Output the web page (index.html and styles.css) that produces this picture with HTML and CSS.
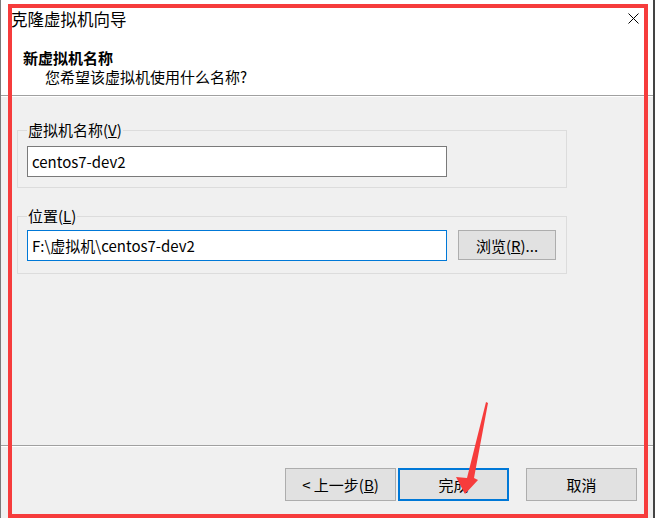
FILE: index.html
```html
<!DOCTYPE html>
<html lang="zh-CN">
<head>
    <meta charset="UTF-8">
    <title>克隆虚拟机向导</title>
    <link rel="stylesheet" href="styles.css">
</head>
<body>
    <div class="window">
        <div class="titlebar">
            <span class="title">克隆虚拟机向导</span>
            <svg class="close" width="11" height="11" viewBox="0 0 11 11">
                <path d="M0.5 0.5 L10.5 10.5 M10.5 0.5 L0.5 10.5" stroke="#000" stroke-width="1" fill="none"/>
            </svg>
        </div>
        <div class="header">
            <div class="header-title">新虚拟机名称</div>
            <div class="header-sub">您希望该虚拟机使用什么名称?</div>
        </div>
        <div class="content">
            <fieldset class="group">
                <legend>虚拟机名称(<u>V</u>)</legend>
                <input class="field" type="text" value="centos7-dev2" readonly>
            </fieldset>
            <fieldset class="group group-location">
                <legend>位置(<u>L</u>)</legend>
                <div class="row">
                    <input class="field field-focus" type="text" value="F:\虚拟机\centos7-dev2" readonly>
                    <button class="btn btn-browse">浏览(<u>R</u>)...</button>
                </div>
            </fieldset>
        </div>
        <div class="footer">
            <button class="btn">&lt; 上一步(<u>B</u>)</button>
            <button class="btn btn-default">完成</button>
            <button class="btn btn-cancel">取消</button>
        </div>

        <!-- annotation overlay -->
        <div class="annot-box"></div>
        <svg class="annot-arrow" width="45" height="100" viewBox="0 0 45 100">
            <polygon points="36,4 38,5 24,80 28,82 15,96 6,79 17,80" fill="#f63c3c"/>
        </svg>
    </div>
</body>
</html>
```

FILE: styles.css
```css
* {
    box-sizing: border-box;
}

body {
    margin: 0;
    background: #f0f0f0;
    font-family: "Noto Sans CJK SC", "Noto Sans", sans-serif;
    color: #000;
}

.window {
    position: relative;
    width: 655px;
    height: 518px;
    border-left: 1px solid #7a7a7a;
    border-right: 2px solid #444;
    background: #f0f0f0;
    display: flex;
    flex-direction: column;
    overflow: hidden;
}

.titlebar {
    height: 38px;
    background: #fff;
    display: flex;
    align-items: center;
    justify-content: space-between;
    padding: 0 14px 0 10px;
    font-size: 16.5px;
}

.close {
    display: block;
    margin-top: -2px;
}

.header {
    height: 58px;
    background: #fff;
    border-bottom: 1px solid #a0a0a0;
    padding-top: 10px;
    font-size: 15px;
}

.header-title {
    font-weight: bold;
    line-height: 19px;
    padding-left: 22px;
}

.header-sub {
    line-height: 19px;
    padding-left: 44px;
}

.content {
    flex: 1;
    border-top: 1px solid #fff;
    padding: 24px 0 0 16px;
}

.group {
    margin: 0;
    width: 550px;
    border: 1px solid #dcdcdc;
    padding: 7px 10px 10px 9px;
}

.group legend {
    padding: 0 1px;
    font-size: 15px;
    line-height: 18px;
}

.group-location {
    margin-top: 19px;
    padding-top: 5px;
    padding-bottom: 12px;
}

.field {
    display: block;
    width: 420px;
    height: 31px;
    margin: 0;
    border: 1px solid #7a7a7a;
    padding: 0 4px;
    background: #fff;
    font-family: inherit;
    font-size: 15px;
    color: #000;
    outline: none;
}

.field-focus {
    border-color: #0078d7;
}

.row {
    display: flex;
    align-items: flex-start;
    gap: 11px;
}

.btn {
    width: 111px;
    height: 33px;
    margin: 0;
    padding: 0;
    background: #e1e1e1;
    border: 1px solid #adadad;
    font-family: inherit;
    font-size: 15px;
    color: #000;
}

.btn-browse {
    width: 98px;
    height: 30px;
}

.btn-default {
    border: 2px solid #0078d7;
}

.footer {
    height: 73px;
    border-top: 1px solid #a0a0a0;
    box-shadow: inset 0 1px 0 #fff;
    display: flex;
    justify-content: flex-end;
    align-items: flex-start;
    gap: 2px;
    padding: 22px 16px 0 0;
}

.btn-cancel {
    margin-left: 15px;
}

.annot-box {
    position: absolute;
    left: 7px;
    top: 4px;
    width: 640px;
    height: 514px;
    border: 4px solid #f63c3c;
    pointer-events: none;
}

.annot-arrow {
    position: absolute;
    left: 449px;
    top: 398px;
    pointer-events: none;
}
```
